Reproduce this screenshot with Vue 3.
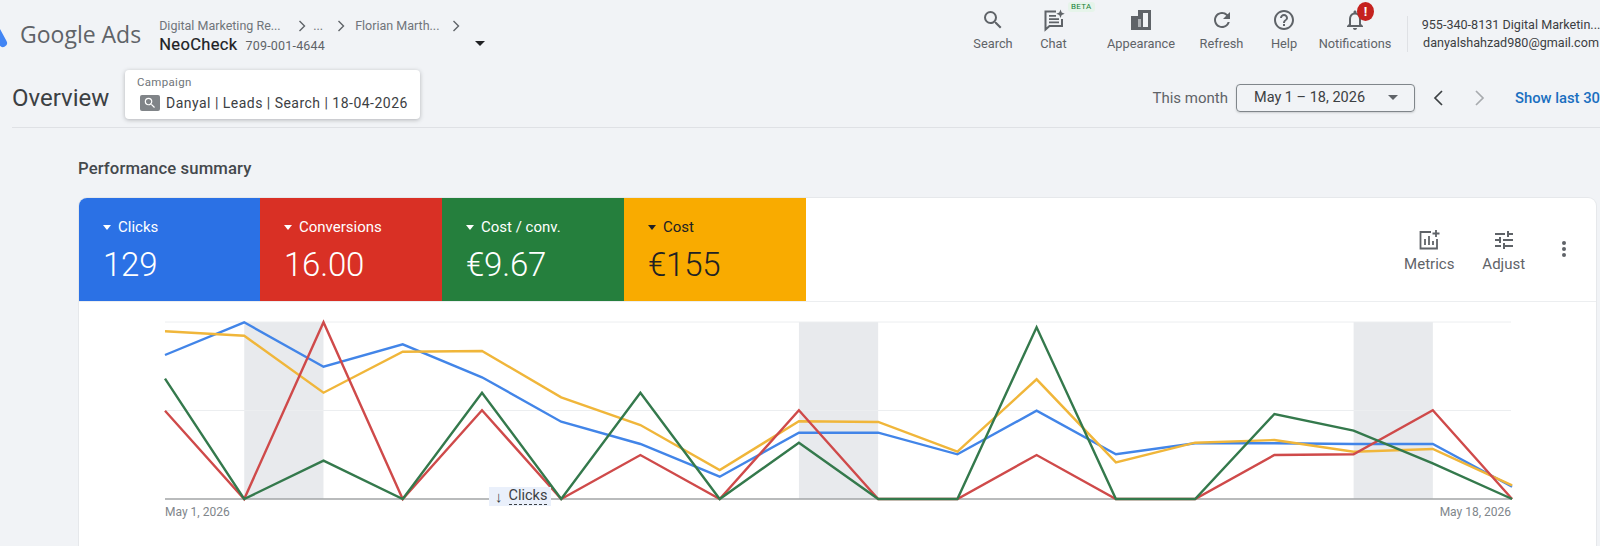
<script setup>
import { computed } from "vue";

const navItems = [
  { label: "Search", icon: "search" },
  { label: "Chat", icon: "chat" },
  { label: "Appearance", icon: "appearance" },
  { label: "Refresh", icon: "refresh" },
  { label: "Help", icon: "help" },
  { label: "Notifications", icon: "bell" },
];

const tabs = [
  { label: "Clicks", value: "129", cls: "blue" },
  { label: "Conversions", value: "16.00", cls: "red" },
  { label: "Cost / conv.", value: "€9.67", cls: "green" },
  { label: "Cost", value: "€155", cls: "yellow" },
];

const X0 = 165;
const STEP = 79.24;
const BASE = 499;
const xAt = (i) => X0 + i * STEP;

const bands = [1, 8, 15].map((i) => ({ x: xAt(i), width: STEP }));

const series = [
  {
    color: "#4285e8",
    ys: [355, 322.3, 366.7, 344.3, 377.3, 421.7, 444, 476.7, 432.7, 432.7, 454.3, 410.7, 454.3, 443.3, 443.3, 444, 444, 486.7],
  },
  {
    color: "#f0b63a",
    ys: [331.3, 335.7, 392.7, 351.7, 351, 397.3, 425, 470, 421.3, 422, 451.7, 379.3, 462.3, 442.7, 440, 451.7, 449, 485.3],
  },
  {
    color: "#cf4a4a",
    ys: [410.7, BASE, 322.3, BASE, 410.3, BASE, 455, BASE, 410.3, BASE, BASE, 455, BASE, BASE, 455, 454.3, 410.3, BASE],
  },
  {
    color: "#34794c",
    ys: [378.7, BASE, 460.7, BASE, 392.7, BASE, 392.7, BASE, 442.7, BASE, BASE, 327.3, BASE, BASE, 414, 430.7, 463.3, BASE],
  },
];

const lines = computed(() =>
  series.map((s) => ({
    color: s.color,
    points: s.ys.map((y, i) => `${xAt(i).toFixed(1)},${y}`).join(" "),
  }))
);
</script>

<template>
  <div class="page">
    <header class="topbar">
      <svg class="logo" width="8" height="22" viewBox="0 0 8 22">
        <path d="M-4 4 L3 17" stroke="#4285f4" stroke-width="8" stroke-linecap="round" fill="none" />
      </svg>
      <span class="brand">Google Ads</span>
      <div class="crumbs">
        <div class="crumb-top">
          <span class="c1">Digital Marketing Re...</span>
          <svg class="sep" width="8" height="12" viewBox="0 0 8 12"><path d="M1.5 1l5 5-5 5" /></svg>
          <span class="c2">...</span>
          <svg class="sep" width="8" height="12" viewBox="0 0 8 12"><path d="M1.5 1l5 5-5 5" /></svg>
          <span class="c3">Florian Marth...</span>
          <svg class="sep" width="8" height="12" viewBox="0 0 8 12"><path d="M1.5 1l5 5-5 5" /></svg>
        </div>
        <div class="crumb-bottom">
          <span class="account-name">NeoCheck</span>
          <span class="account-id">709-001-4644</span>
        </div>
      </div>
      <span class="caret dark crumb-caret"></span>

      <nav class="nav">
        <div v-for="item in navItems" :key="item.label" class="nav-item">
          <svg width="24" height="24" viewBox="0 0 24 24" fill="#5f6368">
            <path v-if="item.icon === 'search'" d="M15.5 14h-.79l-.28-.27A6.471 6.471 0 0 0 16 9.5 6.5 6.5 0 1 0 9.5 16c1.61 0 3.09-.59 4.23-1.57l.27.28v.79l5 4.99L20.49 19l-4.99-5zm-6 0C7.01 14 5 11.99 5 9.5S7.01 5 9.5 5 14 7.01 14 9.5 11.99 14 9.5 14z" />
            <g v-else-if="item.icon === 'chat'">
              <path d="M14 3.5H3.5v18l4-3.5H20v-7" fill="none" stroke="#5f6368" stroke-width="2" />
              <path d="M7 7h7v1.8H7zM7 10.2h10V12H7zM7 13.4h10v1.8H7z" />
              <path d="M18.5 1.5l1.2 3 3 1.2-3 1.2-1.2 3-1.2-3-3-1.2 3-1.2z" />
            </g>
            <g v-else-if="item.icon === 'appearance'">
              <path d="M9 2h13v20H9z M14 5v14h5V5z" fill-rule="evenodd" />
              <path d="M2 8h10v14H2z" />
              <path d="M9 11h3v8H9z" fill="#aeb1b5" />
            </g>
            <path v-else-if="item.icon === 'refresh'" d="M17.65 6.35A7.958 7.958 0 0 0 12 4c-4.42 0-7.99 3.58-7.99 8s3.57 8 7.99 8c3.73 0 6.84-2.55 7.73-6h-2.08A5.99 5.99 0 0 1 12 18c-3.31 0-6-2.69-6-6s2.69-6 6-6c1.66 0 3.14.69 4.22 1.78L13 11h7V4l-2.35 2.35z" />
            <path v-else-if="item.icon === 'help'" d="M11 18h2v-2h-2v2zm1-16C6.48 2 2 6.48 2 12s4.48 10 10 10 10-4.48 10-10S17.52 2 12 2zm0 18c-4.41 0-8-3.59-8-8s3.59-8 8-8 8 3.59 8 8-3.59 8-8 8zm0-14c-2.21 0-4 1.79-4 4h2c0-1.1.9-2 2-2s2 .9 2 2c0 2-3 1.75-3 5h2c0-2.25 3-2.5 3-5 0-2.21-1.79-4-4-4z" />
            <path v-else d="M12 22c1.1 0 2-.9 2-2h-4c0 1.1.89 2 2 2zm6-6v-5c0-3.07-1.64-5.64-4.5-6.32V4c0-.83-.67-1.5-1.5-1.5s-1.5.67-1.5 1.5v.68C7.63 5.36 6 7.92 6 11v5l-2 2v1h16v-1l-2-2zm-2 1H8v-6c0-2.48 1.51-4.5 4-4.5s4 2.02 4 4.5v6z" />
          </svg>
          <span class="nav-label">{{ item.label }}</span>
          <span v-if="item.icon === 'chat'" class="beta">BETA</span>
          <span v-if="item.icon === 'bell'" class="badge">!</span>
        </div>
      </nav>
      <div class="account">
        <div>955-340-8131 Digital Marketin...</div>
        <div>danyalshahzad980@gmail.com</div>
      </div>
    </header>

    <div class="subbar">
      <h1 class="title">Overview</h1>
      <div class="campaign">
        <div class="campaign-label">Campaign</div>
        <div class="campaign-name">
          <span class="campaign-icon">
            <svg width="14" height="14" viewBox="0 0 24 24" fill="#fff">
              <path d="M15.5 14h-.79l-.28-.27A6.471 6.471 0 0 0 16 9.5 6.5 6.5 0 1 0 9.5 16c1.61 0 3.09-.59 4.23-1.57l.27.28v.79l5 4.99L20.49 19l-4.99-5zm-6 0C7.01 14 5 11.99 5 9.5S7.01 5 9.5 5 14 7.01 14 9.5 11.99 14 9.5 14z" />
            </svg>
          </span>
          Danyal | Leads | Search | 18-04-2026
        </div>
      </div>
      <div class="dates">
        <span class="this-month">This month</span>
        <div class="date-box">
          <span>May 1 – 18, 2026</span>
          <span class="caret grey"></span>
        </div>
        <svg class="chev" width="24" height="24" viewBox="0 0 24 24" fill="none" stroke="#3c4043" stroke-width="1.7">
          <path d="M15 5l-7 7 7 7" />
        </svg>
        <svg class="chev next" width="24" height="24" viewBox="0 0 24 24" fill="none" stroke="#a8abaf" stroke-width="1.7">
          <path d="M9 5l7 7-7 7" />
        </svg>
        <span class="show-last">Show last 30</span>
      </div>
    </div>

    <section class="summary">
      <h2 class="summary-title">Performance summary</h2>
      <div class="card">
        <div class="card-head">
          <div v-for="tab in tabs" :key="tab.label" class="tab" :class="tab.cls">
            <div class="tab-label"><span class="caret"></span>{{ tab.label }}</div>
            <div class="tab-value">{{ tab.value }}</div>
          </div>
          <div class="tools">
            <div class="tool">
              <svg width="24" height="24" viewBox="0 0 24 24" fill="none" stroke="#5f6368" stroke-width="1.8">
                <path d="M14 4H3.5v16.5H20V11" />
                <path d="M8 11v6M12 8v9M16 13v4" />
                <path d="M19 2v7M15.5 5.5h7" />
              </svg>
              <span>Metrics</span>
            </div>
            <div class="tool">
              <svg width="24" height="24" viewBox="0 0 24 24" fill="#5f6368">
                <path d="M3 17v2h6v-2H3zM3 5v2h10V5H3zm10 16v-2h8v-2h-8v-2h-2v6h2zM7 9v2H3v2h4v2h2V9H7zm14 4v-2H11v2h10zm-6-4h2V7h4V5h-4V3h-2v6z" />
              </svg>
              <span>Adjust</span>
            </div>
            <svg class="more" width="24" height="24" viewBox="0 0 24 24" fill="#5f6368">
              <circle cx="12" cy="6" r="2" />
              <circle cx="12" cy="12" r="2" />
              <circle cx="12" cy="18" r="2" />
            </svg>
          </div>
        </div>

        <div class="chart">
          <svg class="plot" width="1517" height="200" viewBox="79 302 1517 200">
            <rect v-for="b in bands" :key="b.x" :x="b.x" y="322" :width="b.width" height="177" fill="#e8eaed" />
            <line x1="165" x2="1511" y1="322" y2="322" stroke="#eceef0" />
            <line x1="165" x2="1511" y1="410.5" y2="410.5" stroke="#eceef0" />
            <line x1="165" x2="1511" y1="499" y2="499" stroke="#a2a4a6" stroke-width="1.5" />
            <polyline
              v-for="l in lines"
              :key="l.color"
              :points="l.points"
              :stroke="l.color"
              stroke-width="2.4"
              fill="none"
            />
          </svg>
          <div class="axis-chip">
            <span class="arrow">↓</span>
            <span class="chip-text">Clicks</span>
          </div>
          <div class="axis-dates">
            <span>May 1, 2026</span>
            <span>May 18, 2026</span>
          </div>
        </div>
      </div>
    </section>
  </div>
</template>

<style scoped>
.page {
  width: 1600px;
  height: 546px;
  overflow: hidden;
  background: #f1f3f6;
  font-family: Roboto, "Liberation Sans", sans-serif;
  color: #3c4043;
}

.topbar {
  display: flex;
  align-items: center;
  height: 68px;
}

.logo {
  margin-top: 6px;
  flex: none;
}

.brand {
  margin-left: 12px;
  font-family: "Open Sans", Roboto, sans-serif;
  font-size: 23px;
  color: #5f6368;
  white-space: nowrap;
}

.crumbs {
  margin-left: 18px;
  width: 320px;
  margin-top: 2px;
}

.crumb-top {
  display: flex;
  align-items: center;
  font-size: 12.5px;
  color: #70757a;
  height: 18px;
}

.c1 {
  width: 132px;
  white-space: nowrap;
}

.c2 {
  width: 17px;
  margin-left: 7px;
}

.c3 {
  width: 90px;
  margin-left: 10px;
  white-space: nowrap;
}

.sep {
  flex: none;
  fill: none;
  stroke: #5f6368;
  stroke-width: 1.4;
  margin-left: 7px;
}

.crumb-bottom {
  display: flex;
  align-items: baseline;
  gap: 8px;
}

.account-name {
  font-size: 16.5px;
  font-weight: 400;
  letter-spacing: 0.35px;
  color: #202124;
  -webkit-text-stroke: 0.2px #202124;
}

.account-id {
  font-size: 12.5px;
  letter-spacing: 0.2px;
  color: #5f6368;
}

.caret {
  display: inline-block;
  width: 0;
  height: 0;
  border-left: 5px solid transparent;
  border-right: 5px solid transparent;
  border-top: 5px solid currentColor;
}

.caret.dark {
  color: #202124;
}

.caret.grey {
  color: #5f6368;
}

.crumb-caret {
  margin-top: 18px;
  margin-left: -4px;
}

.nav {
  margin-left: auto;
  display: grid;
  grid-template-columns: 60px 61px 114px 47px 78px 64px;
  margin-right: 20px;
}

.nav-item {
  position: relative;
  display: flex;
  flex-direction: column;
  align-items: center;
  padding-top: 1px;
  height: 54px;
  box-sizing: border-box;
}

.nav-label {
  margin-top: 4px;
  font-size: 12.8px;
  line-height: 16px;
  color: #5f6368;
  white-space: nowrap;
}

.beta {
  position: absolute;
  top: -5px;
  left: 45px;
  padding: 0 3px;
  border-radius: 3px;
  font-size: 8px;
  line-height: 10px;
  letter-spacing: 0.3px;
  color: #188038;
  background: #e6f4ea;
}

.badge {
  position: absolute;
  top: -5px;
  left: 34px;
  width: 17px;
  height: 19px;
  border-radius: 50%;
  background: #c5221f;
  color: #fff;
  font-size: 13px;
  font-weight: 700;
  line-height: 19px;
  text-align: center;
}

.account {
  flex: none;
  width: 182px;
  margin-right: -2px;
  padding-left: 12px;
  border-left: 1px solid #dfe1e5;
  font-size: 12.6px;
  line-height: 18px;
  text-align: center;
  white-space: nowrap;
  color: #3c4043;
}

.subbar {
  display: flex;
  align-items: center;
  height: 59px;
  margin-left: 12px;
  border-bottom: 1px solid #dfe1e5;
}

.title {
  margin: 0;
  width: 113px;
  font-size: 24px;
  font-weight: 400;
  color: #3c4043;
  flex: none;
}

.campaign {
  align-self: flex-start;
  margin-top: 2px;
  width: 295px;
  height: 49px;
  box-sizing: border-box;
  padding: 5px 12px;
  background: #fff;
  border-radius: 4px;
  box-shadow: 0 1px 4px rgba(60, 64, 67, 0.35);
}

.campaign-label {
  font-size: 11.5px;
  line-height: 15px;
  letter-spacing: 0.3px;
  color: #70757a;
}

.campaign-name {
  display: flex;
  align-items: center;
  gap: 6px;
  margin-top: 5px;
  font-size: 14px;
  letter-spacing: 0.48px;
  white-space: nowrap;
  color: #3c4043;
}

.campaign-icon {
  display: flex;
  align-items: center;
  justify-content: center;
  margin-left: 3px;
  width: 20px;
  height: 16px;
  border-radius: 2px;
  background: #808488;
}

.dates {
  display: flex;
  align-items: center;
  margin-left: auto;
  flex: none;
  white-space: nowrap;
  font-size: 14.5px;
}

.this-month {
  color: #5f6368;
  font-size: 15px;
  margin-right: 8px;
}

.date-box {
  display: flex;
  align-items: center;
  justify-content: space-between;
  width: 179px;
  height: 28px;
  box-sizing: border-box;
  padding: 0 16px 0 17px;
  border: 1px solid #80868b;
  border-radius: 4px;
  box-shadow: 0 1px 2px rgba(60, 64, 67, 0.2);
  color: #3c4043;
}

.chev {
  margin-left: 12px;
}

.chev.next {
  margin-left: 16px;
}

.show-last {
  margin-left: 24px;
  font-size: 14.8px;
  color: #1a6fc0;
  font-weight: 500;
}

.summary-title {
  margin: 31px 0 19px 78px;
  font-size: 16.7px;
  line-height: 20px;
  font-weight: 500;
  letter-spacing: 0.1px;
  color: #44484c;
}

.card {
  margin-left: 79px;
  width: 1517px;
  height: 400px;
  background: #fff;
  border-radius: 8px;
  box-shadow: 0 0 0 1px #e6e8eb;
  overflow: hidden;
}

.card-head {
  display: flex;
  height: 104px;
  box-sizing: border-box;
  border-bottom: 1px solid #eceef0;
}

.tab {
  width: 182px;
  box-sizing: border-box;
  padding: 20px 0 0 24px;
  color: #fff;
}

.blue {
  width: 181px;
  background: #2b71e5;
}

.red {
  background: #d93025;
}

.green {
  background: #257f3d;
}

.yellow {
  background: #f9ab00;
  color: #202124;
}

.tab-label {
  display: flex;
  align-items: center;
  font-size: 15px;
  line-height: 18px;
}

.tab-label .caret {
  margin-right: 7px;
  border-left-width: 4.5px;
  border-right-width: 4.5px;
  border-top-width: 5px;
}

.tab-value {
  margin-top: 9px;
  font-size: 33px;
  font-weight: 300;
  letter-spacing: -0.2px;
  line-height: 40px;
}

.tools {
  display: flex;
  align-items: flex-start;
  margin-left: auto;
}

.tool {
  display: flex;
  flex-direction: column;
  align-items: center;
  width: 74.5px;
  margin-top: 30px;
  font-size: 15px;
  line-height: 18px;
  color: #5f6368;
}

.tool span {
  margin-top: 3px;
}

.more {
  margin: 39px 20px 0 11px;
}

.chart {
  position: relative;
}

.plot {
  display: block;
}

.axis-chip {
  position: absolute;
  left: 410px;
  top: 185px;
  display: flex;
  align-items: center;
  gap: 6px;
  height: 19px;
  padding: 0 4px 0 6px;
  background: #eaf0fb;
  font-size: 14.5px;
  color: #3c4043;
}

.arrow {
  font-size: 15px;
}

.chip-text {
  border-bottom: 1px dashed #3c4043;
  line-height: 16px;
}

.axis-dates {
  display: flex;
  justify-content: space-between;
  padding: 0 85px 0 86px;
  font-size: 12px;
  line-height: 20px;
  color: #80868b;
}
</style>

<style>
html,
body {
  margin: 0;
  overflow: hidden;
}
</style>
